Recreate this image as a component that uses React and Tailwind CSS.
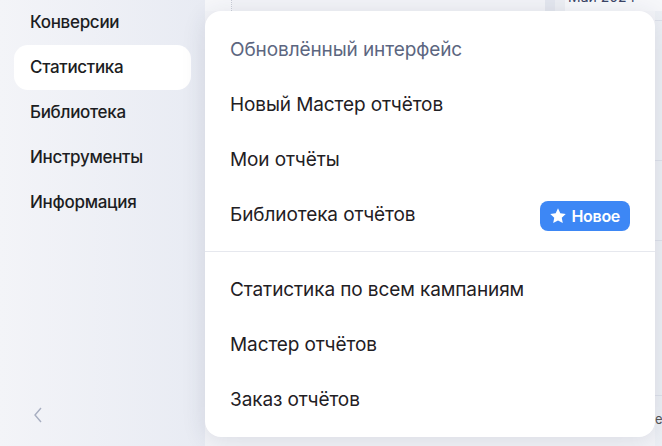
import React from "react";

const Star = () => (
  <svg width="18" height="18" viewBox="0 0 24 24" fill="white">
    <path d="M12 1.8l3.1 6.6 7.2.9-5.3 5 1.4 7.1L12 17.9l-6.4 3.5L7 14.3l-5.3-5 7.2-.9z" />
  </svg>
);

export default function App() {
  const side = ["Конверсии", "Статистика", "Библиотека", "Инструменты", "Информация"];
  const top = ["Новый Мастер отчётов", "Мои отчёты", "Библиотека отчётов"];
  const bottom = ["Статистика по всем кампаниям", "Мастер отчётов", "Заказ отчётов"];
  return (
    <div
      className="relative flex h-[446px] w-[662px] overflow-hidden bg-[#eef0f5]"
      style={{ fontFamily: "Inter, 'Open Sans', sans-serif" }}
    >
      {/* sidebar */}
      <div className="flex w-[205px] shrink-0 flex-col bg-gradient-to-r from-[#f3f4f8] to-[#e8ebf3] px-[14px]">
        <div className="flex flex-col">
          {side.map((s, i) => (
            <div
              key={s}
              className={`flex h-[45px] items-center px-4 text-[17px] font-medium tracking-[-0.3px] text-[#1c1d22] ${
                i === 0 ? "h-[44px]" : ""
              } ${i === 1 ? "rounded-[14px] bg-white" : ""}`}
            >
              {s}
            </div>
          ))}
        </div>
        <div className="mt-auto mb-[19px] flex h-6 items-center pl-[18px]">
          <svg width="12" height="18" viewBox="0 0 12 18" fill="none" stroke="#a7aec0" strokeWidth="1.4">
            <path d="M9 2L3 9l6 7" />
          </svg>
        </div>
      </div>

      {/* main content behind */}
      <div className="flex flex-1 flex-col bg-[#f3f4f8]">
        <div className="flex h-[11px]">
          <div className="w-[27px] border-r border-dotted border-[#c9ccd6] bg-[#f6f7fa]" />
          <div className="w-[313px] bg-[#f2f3f7]" />
          <div className="w-[10px] bg-[#e3e6ee]" />
          <div className="w-[10px] bg-[#eceef3]" />
          <div className="relative flex-1 overflow-hidden bg-[#f6f7fa]">
            <span className="absolute -top-[14px] left-[3px] text-[14px] text-[#3b4466]">Май 2024</span>
          </div>
        </div>
        <div className="flex flex-1 justify-end">
          <div className="flex w-[7px] flex-col bg-[#edf0f5]">
            <div className="h-[9px]" />
            <div className="h-[140px] border-t border-[#dde1ea]" />
            <div className="h-[80px] border-t border-[#dde1ea]" />
            <div className="h-[155px] border-t border-[#dde1ea]" />
            <div className="flex-1 border-t border-[#dde1ea] pt-[17px] text-[13px] leading-none text-[#555]">ем</div>
          </div>
        </div>
      </div>

      {/* dropdown menu */}
      <div className="absolute left-[205px] top-[11px] flex h-[426px] w-[450px] flex-col rounded-[16px] bg-white pt-[12px] shadow-[0_4px_24px_rgba(40,50,80,0.12)]">
        <div className="flex h-[55px] items-center px-[25px] text-[19px] tracking-[-0.1px] text-[#5c6680]">
          Обновлённый интерфейс
        </div>
        {top.map((t, i) => (
          <div key={t} className="flex h-[55px] items-center justify-between px-[25px] text-[19px] tracking-[-0.1px] text-[#1f2024]">
            <span>{t}</span>
            {i === 2 && (
              <span className="flex h-[30px] items-center gap-[4px] rounded-[8px] bg-[#3d87f5] pl-[9px] pr-[10px] text-[16px] font-semibold tracking-[-0.3px] text-white">
                <Star />
                Новое
              </span>
            )}
          </div>
        ))}
        <div className="mt-[8px] mb-[11px] h-px bg-[#e6e8ee]" />
        {bottom.map((t) => (
          <div key={t} className="flex h-[55px] items-center px-[25px] text-[19px] tracking-[-0.1px] text-[#1f2024]">
            {t}
          </div>
        ))}
      </div>
    </div>
  );
}
